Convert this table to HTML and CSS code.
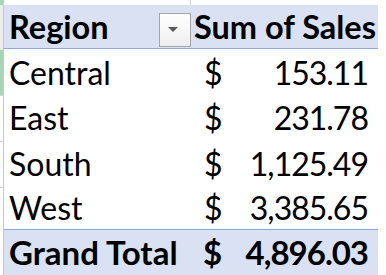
FILE: index.html
```html
<!DOCTYPE html>
<html>
<head>
<meta charset="utf-8">
<link rel="stylesheet" href="styles.css">
</head>
<body>
<div class="sheet">
  <div class="gutter">
    <div class="g g-top sel"></div>
    <div class="g g-head"></div>
    <div class="g g-row sel"></div>
    <div class="g g-row"></div>
    <div class="g g-row"></div>
    <div class="g g-west"></div>
    <div class="g g-total"></div>
  </div>
  <div class="grid">
    <div class="strip">
      <div class="strip-cell"></div>
      <div class="strip-cell"></div>
    </div>
    <div class="row head">
      <div class="cell c1">
        <span>Region</span>
        <span class="dd"><svg width="10" height="5" viewBox="0 0 10 5"><path d="M0 0H10L5 5Z" fill="#595959"/></svg></span>
      </div>
      <div class="cell c2"><span>Sum of Sales</span></div>
    </div>
    <div class="row body r46">
      <div class="cell c1">Central</div>
      <div class="cell c2"><span class="cur">$</span><span class="num">153.11</span></div>
    </div>
    <div class="row body r46">
      <div class="cell c1">East</div>
      <div class="cell c2"><span class="cur">$</span><span class="num">231.78</span></div>
    </div>
    <div class="row body r46">
      <div class="cell c1">South</div>
      <div class="cell c2"><span class="cur">$</span><span class="num">1,125.49</span></div>
    </div>
    <div class="row body r43">
      <div class="cell c1">West</div>
      <div class="cell c2"><span class="cur">$</span><span class="num">3,385.65</span></div>
    </div>
    <div class="row total">
      <div class="cell c1">Grand Total</div>
      <div class="cell c2"><span class="cur">$</span><span class="num">4,896.03</span></div>
    </div>
  </div>
</div>
</body>
</html>
```

FILE: styles.css
```css
html, body {
  margin: 0;
  padding: 0;
  background: #ffffff;
  overflow: hidden;
}
body {
  font-family: Lato, "Open Sans", sans-serif;
  font-size: 32px;
  color: #000;
  white-space: nowrap;
}
.sheet {
  display: flex;
  width: 386px;
  height: 275px;
}
.gutter {
  width: 3px;
  flex: none;
  border-right: 1px solid #c8c8c8;
  display: flex;
  flex-direction: column;
}
.g { width: 3px; box-sizing: border-box; }
.g-top { height: 5px; }
.g-head { height: 45px; background: #ececec; }
.g-row { height: 46px; border-bottom: 1px solid #d4d4d4; }
.g-west { height: 43px; }
.g-total { flex: 1; }
.sel { background: #a9d5b6; }
.grid {
  width: 374px;
  display: flex;
  flex-direction: column;
  flex: none;
}
.strip {
  height: 5px;
  display: flex;
}
.strip-cell { width: 186px; }
.strip-cell:first-child { border-right: 1px solid #d4d4d4; }
.row {
  display: flex;
  box-sizing: border-box;
}
.head {
  height: 45px;
  background: #d9e1f2;
  border-bottom: 1px solid #8ea9db;
  font-weight: bold;
  font-size: 32.5px;
}
.r46 { height: 46px; }
.r43 { height: 43px; }
.total {
  height: 47px;
  background: #d9e1f2;
  border-top: 1px solid #8ea9db;
  font-weight: bold;
  font-size: 33px;
}
.cell {
  display: flex;
  align-items: center;
}
.c1 {
  width: 186px;
  flex: none;
  padding-left: 5px;
  box-sizing: border-box;
  justify-content: space-between;
}
.c2 {
  flex: 1;
  min-width: 0;
  padding-left: 14px;
  padding-right: 10px;
  justify-content: space-between;
}
.total .c2 { padding-left: 13px; }
.head .c2 { padding-left: 4px; padding-right: 0; }
.num { letter-spacing: -1px; }
.dd {
  width: 32px;
  height: 34px;
  margin-right: -1px;
  margin-top: 6px;
  box-sizing: border-box;
  border: 1px solid #a6a6a6;
  background: linear-gradient(#ffffff, #eeeeee);
  display: flex;
  align-items: center;
  justify-content: center;
  padding-right: 4px;
  font-size: 0;
}
.dd svg { display: block; }
```
